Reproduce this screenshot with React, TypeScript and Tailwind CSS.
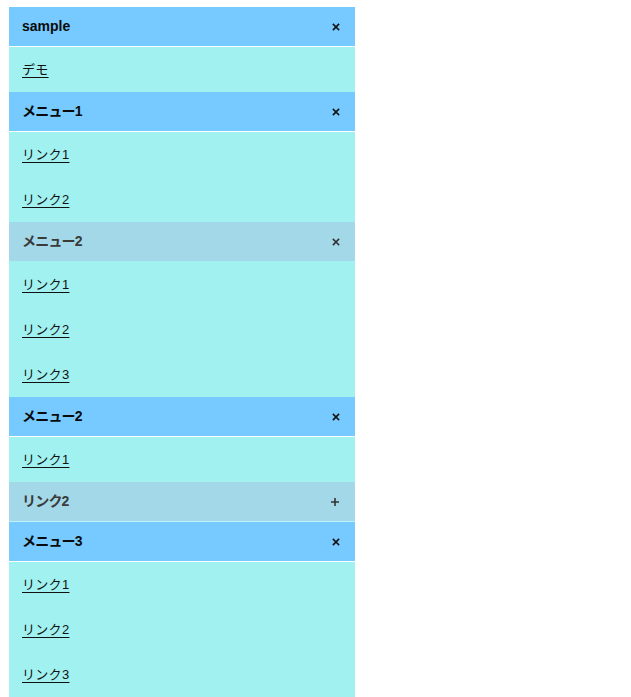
import React from "react";

type Item =
  | { kind: "header"; label: string; open: boolean; active: boolean }
  | { kind: "link"; label: string };

const items: Item[] = [
  { kind: "header", label: "sample", open: true, active: true },
  { kind: "link", label: "デモ" },
  { kind: "header", label: "メニュー1", open: true, active: true },
  { kind: "link", label: "リンク1" },
  { kind: "link", label: "リンク2" },
  { kind: "header", label: "メニュー2", open: true, active: false },
  { kind: "link", label: "リンク1" },
  { kind: "link", label: "リンク2" },
  { kind: "link", label: "リンク3" },
  { kind: "header", label: "メニュー2", open: true, active: true },
  { kind: "link", label: "リンク1" },
  { kind: "header", label: "リンク2", open: false, active: false },
  { kind: "header", label: "メニュー3", open: true, active: true },
  { kind: "link", label: "リンク1" },
  { kind: "link", label: "リンク2" },
  { kind: "link", label: "リンク3" },
];

function CloseIcon({ color }: { color: string }) {
  return (
    <svg width="8" height="8" viewBox="0 0 8 8" className="block">
      <path d="M1.5 1.5L6.5 6.5M6.5 1.5L1.5 6.5" stroke={color} strokeWidth="1.7" strokeLinecap="square" />
    </svg>
  );
}

function PlusIcon({ color }: { color: string }) {
  return (
    <svg width="10" height="10" viewBox="0 0 10 10" className="block">
      <path d="M5 1V9M1 5H9" stroke={color} strokeWidth="1.6" />
    </svg>
  );
}

export default function App() {
  return (
    <div
      className="min-h-[697px] bg-white pt-[7px] pl-[9px]"
      style={{ fontFamily: '"Liberation Sans", "Noto Sans CJK JP", sans-serif' }}
    >
      <div className="w-[346px] bg-[#a0f1f0]">
        {items.map((it, i) =>
          it.kind === "header" ? (
            <div
              key={i}
              className={
                it.active
                  ? "h-[40px] flex items-center justify-between pl-[13px] pr-[15px] bg-[#76caff] border-b border-white text-[14px] font-bold text-[#0a0a0a]"
                  : it.open
                  ? "h-[40px] flex items-center justify-between pl-[13px] pr-[15px] bg-[#a3d8e8] border-b border-[#a0f1f0] text-[14px] font-bold text-[#3a3a3a]"
                  : "h-[40px] flex items-center justify-between pl-[13px] pr-[15px] bg-[#a3d8e8] border-b border-[#bdf3f6] text-[14px] font-bold text-[#3a3a3a]"
              }
            >
              <span className={it.label === "sample" ? "leading-none -mt-[1px]" : "leading-none -mt-[1px] tracking-[-0.8px]"}>
                {it.label}
              </span>
              {it.open ? (
                <CloseIcon color={it.active ? "#111" : "#333"} />
              ) : (
                <PlusIcon color="#333" />
              )}
            </div>
          ) : (
            <div key={i} className="h-[45px] flex items-center pl-[13px]">
              <a href="#" className="text-[13px] text-[#111] underline underline-offset-[3px] leading-none tracking-[0.3px]">
                {it.label}
              </a>
            </div>
          )
        )}
      </div>
    </div>
  );
}
